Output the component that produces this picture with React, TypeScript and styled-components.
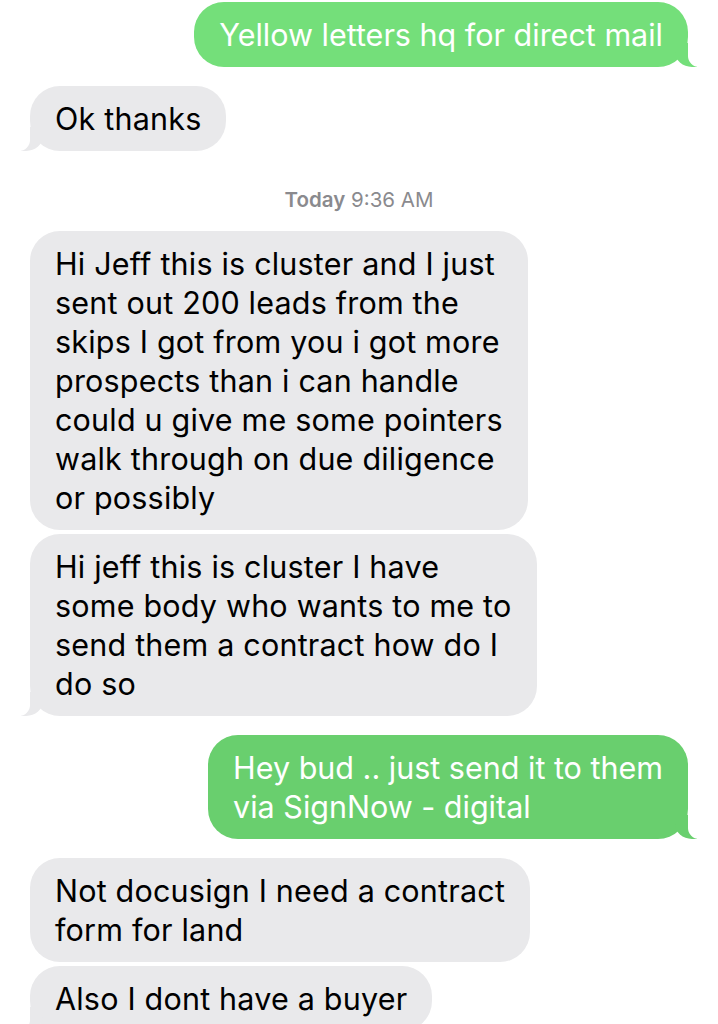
import React from "react"
import styled, { createGlobalStyle, css } from "styled-components"

type Side = "in" | "out"

type Message = {
  side: Side
  lines: string[]
  tail?: boolean
  tone?: string
  gapTop: number
}

const messages: Message[] = [
  { side: "out", lines: ["Yellow letters hq for direct mail"], tail: true, tone: "#74df7a", gapTop: 0 },
  { side: "in", lines: ["Ok thanks"], tail: true, gapTop: 19 },
]

const later: Message[] = [
  {
    side: "in",
    lines: [
      "Hi Jeff this is cluster and I just",
      "sent out 200 leads from the",
      "skips I got from you i got more",
      "prospects than i can handle",
      "could u give me some pointers",
      "walk through on due diligence",
      "or possibly",
    ],
    gapTop: 0,
  },
  {
    side: "in",
    lines: [
      "Hi jeff this is cluster I have",
      "some body who wants to me to",
      "send them a contract how do I",
      "do so",
    ],
    tail: true,
    gapTop: 4,
  },
  {
    side: "out",
    lines: ["Hey bud .. just send it to them", "via SignNow - digital"],
    tail: true,
    tone: "#69cf6e",
    gapTop: 19,
  },
  { side: "in", lines: ["Not docusign I need a contract", "form for land"], gapTop: 19 },
  { side: "in", lines: ["Also I dont have a buyer"], tail: true, gapTop: 4 },
]

export default function App() {
  return (
    <>
      <GlobalStyle />
      <Thread>
        {messages.map((m, i) => (
          <Bubble key={i} {...m} />
        ))}
        <Stamp>
          <strong>Today</strong> 9:36 AM
        </Stamp>
        {later.map((m, i) => (
          <Bubble key={i} {...m} />
        ))}
      </Thread>
    </>
  )
}

const Bubble = (props: Message) => {
  const { side, lines, tail, tone, gapTop } = props
  return (
    <Row $side={side} $gap={gapTop}>
      <Body $side={side} $tone={tone || "#e9e9eb"} $tail={!!tail}>
        {lines.map((l, i) => (
          <Line key={i}>{l}</Line>
        ))}
      </Body>
    </Row>
  )
}

const GlobalStyle = createGlobalStyle`
  html, body {
    margin: 0;
    padding: 0;
    background: #ffffff;
  }
  body {
    font-family: Inter, "Liberation Sans", sans-serif;
    -webkit-font-smoothing: antialiased;
  }
`

const Thread = styled.div`
  width: 718px;
  height: 1024px;
  overflow: hidden;
  display: flex;
  flex-direction: column;
  padding: 2px 30px 0 30px;
  box-sizing: border-box;
`

const Row = styled.div<{ $side: Side; $gap: number }>`
  display: flex;
  justify-content: ${(p) => (p.$side === "out" ? "flex-end" : "flex-start")};
  margin-top: ${(p) => p.$gap}px;
`

const tailOut = (tone: string) => css`
  &::before {
    content: "";
    position: absolute;
    z-index: 0;
    bottom: 0;
    right: -9px;
    width: 22px;
    height: 24px;
    background: ${tone};
    border-bottom-left-radius: 17px 15px;
  }
  &::after {
    content: "";
    position: absolute;
    z-index: 1;
    bottom: 0;
    right: -12px;
    width: 12px;
    height: 24px;
    background: #ffffff;
    border-bottom-left-radius: 11px;
  }
`

const tailIn = (tone: string) => css`
  &::before {
    content: "";
    position: absolute;
    z-index: 0;
    bottom: 0;
    left: -9px;
    width: 22px;
    height: 24px;
    background: ${tone};
    border-bottom-right-radius: 17px 15px;
  }
  &::after {
    content: "";
    position: absolute;
    z-index: 1;
    bottom: 0;
    left: -12px;
    width: 12px;
    height: 24px;
    background: #ffffff;
    border-bottom-right-radius: 11px;
  }
`

const Body = styled.div<{ $side: Side; $tone: string; $tail: boolean }>`
  position: relative;
  background: ${(p) => p.$tone};
  color: ${(p) => (p.$side === "out" ? "#ffffff" : "#000000")};
  border-radius: 30px;
  padding: 13px 25px 13px 25px;
  font-size: 30.5px;
  line-height: 39px;
  letter-spacing: ${(p) => (p.$side === "out" ? "0" : "0.2px")};
  ${(p) => p.$tail && (p.$side === "out" ? tailOut(p.$tone) : tailIn(p.$tone))}
`

const Line = styled.div`
  position: relative;
  z-index: 2;
  white-space: nowrap;
`

const Stamp = styled.div`
  margin: 39px 0 21px;
  text-align: center;
  color: #8a8a8e;
  font-size: 20.5px;
  line-height: 20px;
  strong {
    font-weight: 600;
  }
`
